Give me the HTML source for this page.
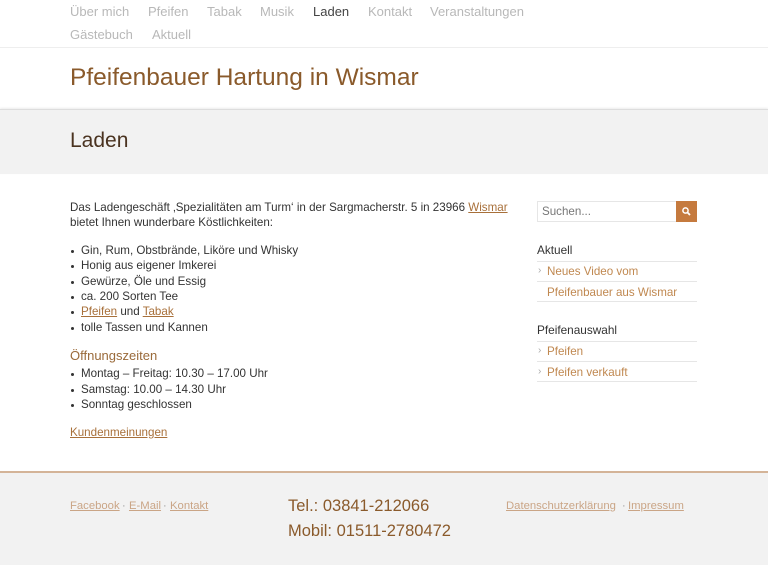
<!DOCTYPE html>
<html><head><meta charset="utf-8"><style>
*{margin:0;padding:0;box-sizing:border-box}
body{width:768px;height:576px;position:relative;background:#fff;font-family:"Liberation Sans",sans-serif;color:#333;overflow:hidden}
.a{position:absolute;white-space:nowrap}
.nav{font-size:13px;color:#b8b8b8}
.br{color:#8a5a2b}
.lk{color:#a8703a;text-decoration:underline}
.t{font-size:11.6px;color:#333}
.li::before{content:"";position:absolute;left:-10px;top:6px;width:3px;height:3px;background:#333;border-radius:50%}
.sb{font-size:11.6px;color:#c08850}
.ar::before{content:"›";position:absolute;left:-9px;color:#aaa;font-size:10px}
.hr{position:absolute;height:1px;background:#e6e6e6}
.fl{font-size:11.3px;color:#caa586;text-decoration:underline}
</style></head><body>
<div class="a nav" style="left:70px;top:4px">Über mich</div>
<div class="a nav" style="left:148px;top:4px">Pfeifen</div>
<div class="a nav" style="left:207px;top:4px">Tabak</div>
<div class="a nav" style="left:260px;top:4px">Musik</div>
<div class="a nav" style="left:313px;top:4px;color:#444">Laden</div>
<div class="a nav" style="left:368px;top:4px">Kontakt</div>
<div class="a nav" style="left:430px;top:4px">Veranstaltungen</div>
<div class="a nav" style="left:70px;top:27px">Gästebuch</div>
<div class="a nav" style="left:152px;top:27px">Aktuell</div>
<div style="position:absolute;left:0;top:47px;width:768px;height:1px;background:#eee"></div>
<div class="a br" style="left:70px;top:64px;font-size:24.5px">Pfeifenbauer Hartung in Wismar</div>
<div style="position:absolute;left:0;top:109px;width:768px;height:65px;background:#f2f2f2;border-top:1px solid #ddd;box-shadow:0 -1px 2px rgba(0,0,0,.08)"></div>
<div class="a" style="left:70px;top:129px;font-size:21px;color:#4a3320">Laden</div>

<div class="a t" style="left:70px;top:201px">Das Ladengeschäft ‚Spezialitäten am Turm‘ in der Sargmacherstr. 5 in 23966 <span class="lk">Wismar</span></div>
<div class="a t" style="left:70px;top:216px">bietet Ihnen wunderbare Köstlichkeiten:</div>
<div class="a t li" style="left:81px;top:244px">Gin, Rum, Obstbrände, Liköre und Whisky</div>
<div class="a t li" style="left:81px;top:259px">Honig aus eigener Imkerei</div>
<div class="a t li" style="left:81px;top:275px">Gewürze, Öle und Essig</div>
<div class="a t li" style="left:81px;top:290px">ca. 200 Sorten Tee</div>
<div class="a t li" style="left:81px;top:305px"><span class="lk">Pfeifen</span> und <span class="lk">Tabak</span></div>
<div class="a t li" style="left:81px;top:321px">tolle Tassen und Kannen</div>
<div class="a" style="left:70px;top:348px;font-size:13px;color:#9a6a3a">Öffnungszeiten</div>
<div class="a t li" style="left:81px;top:367px">Montag – Freitag: 10.30 – 17.00 Uhr</div>
<div class="a t li" style="left:81px;top:383px">Samstag: 10.00 – 14.30 Uhr</div>
<div class="a t li" style="left:81px;top:398px">Sonntag geschlossen</div>
<div class="a t" style="left:70px;top:426px"><span class="lk">Kundenmeinungen</span></div>

<div style="position:absolute;left:537px;top:201px;width:140px;height:21px;border:1px solid #e6e6e6"></div>
<div class="a" style="left:542px;top:205px;font-size:11.6px;color:#777">Suchen...</div>
<div style="position:absolute;left:676px;top:201px;width:21px;height:21px;background:#c57a3e"></div>
<svg style="position:absolute;left:681px;top:206px" width="11" height="11" viewBox="0 0 11 11"><circle cx="4.5" cy="4.5" r="2.6" fill="none" stroke="#fff" stroke-width="1.5"/><path d="M6.5 6.5L9 9" stroke="#fff" stroke-width="1.8"/></svg>
<div class="a t" style="left:537px;top:243px;font-size:11.8px">Aktuell</div>
<div class="hr" style="left:537px;top:261px;width:160px"></div>
<div class="a sb ar" style="left:547px;top:265px">Neues Video vom</div>
<div class="hr" style="left:537px;top:281px;width:160px"></div>
<div class="a sb" style="left:547px;top:286px">Pfeifenbauer aus Wismar</div>
<div class="hr" style="left:537px;top:301px;width:160px"></div>
<div class="a t" style="left:537px;top:323px;font-size:11.8px">Pfeifenauswahl</div>
<div class="hr" style="left:537px;top:341px;width:160px"></div>
<div class="a sb ar" style="left:547px;top:345px">Pfeifen</div>
<div class="hr" style="left:537px;top:361px;width:160px"></div>
<div class="a sb ar" style="left:547px;top:366px">Pfeifen verkauft</div>
<div class="hr" style="left:537px;top:381px;width:160px"></div>

<div style="position:absolute;left:0;top:471px;width:768px;height:94px;background:#f2f2f2;border-top:2px solid #d4b498"></div>
<div class="a fl" style="left:70px;top:500px">Facebook</div>
<div class="a" style="left:122px;top:500px;font-size:11px;color:#999">·</div>
<div class="a fl" style="left:129px;top:500px">E-Mail</div>
<div class="a" style="left:163px;top:500px;font-size:11px;color:#999">·</div>
<div class="a fl" style="left:170px;top:500px">Kontakt</div>
<div class="a br" style="left:288px;top:497px;font-size:16.5px">Tel.: 03841-212066</div>
<div class="a br" style="left:288px;top:522px;font-size:16.5px">Mobil: 01511-2780472</div>
<div class="a fl" style="left:506px;top:500px">Datenschutzerklärung</div>
<div class="a" style="left:622px;top:500px;font-size:11px;color:#999">·</div>
<div class="a fl" style="left:628px;top:500px">Impressum</div>
</body></html>
